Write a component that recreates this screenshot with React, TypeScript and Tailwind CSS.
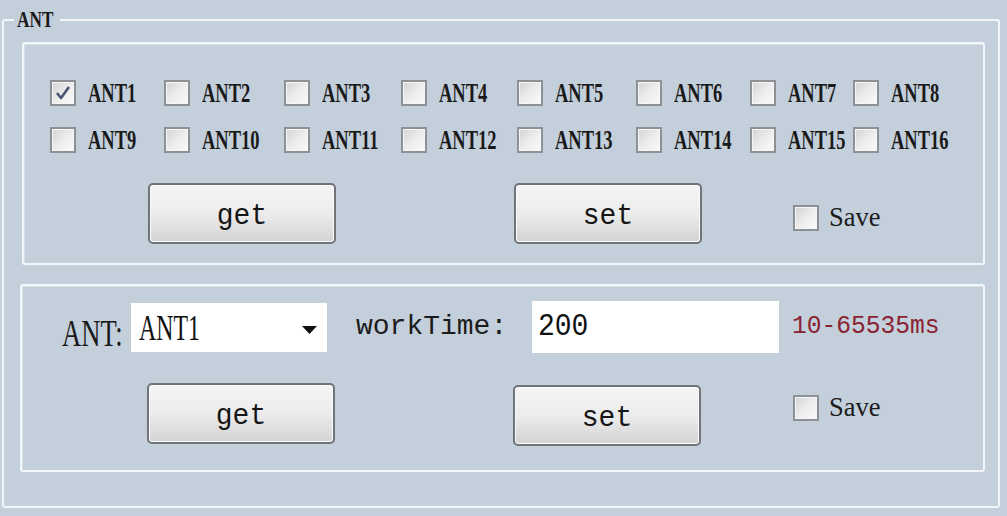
import React from "react";

const serif = "font-['Liberation_Serif',serif]";
const mono = "font-['Liberation_Mono',monospace]";

function Check({ checked = false }: { checked?: boolean }) {
  return (
    <div className="relative w-[26px] h-[26px] shrink-0 border-2 border-[#8d9196] bg-gradient-to-br from-[#d2d3d4] via-[#ececec] to-[#fbfbfb] shadow-[inset_0_0_0_1px_#f6f6f6]">
      {checked && (
        <svg viewBox="0 0 22 22" className="absolute inset-0 w-full h-full">
          <path d="M5 11 L9 16 L17 5" fill="none" stroke="#4a5572" strokeWidth="2.6" strokeLinejoin="round" />
        </svg>
      )}
    </div>
  );
}

function Btn({ label }: { label: string }) {
  return (
    <div className={`flex items-center justify-center w-[188px] h-[61px] shrink-0 rounded-[5px] border-2 border-[#707479] bg-gradient-to-b from-[#f5f5f5] via-[#ececec] via-50% to-[#d3d3d3] shadow-[inset_0_0_0_1px_#fbfbfb] ${mono} text-[28px] text-[#161616] leading-none pt-[4px]`}>
      <span className="inline-block origin-center scale-y-[1.08]">{label}</span>
    </div>
  );
}

function SaveBox() {
  return (
    <div className="flex items-center">
      <Check />
      <span className={`ml-[10px] inline-block origin-left scale-x-[0.98] ${serif} text-[27px] leading-none text-[#1b1b1b]`}>
        Save
      </span>
    </div>
  );
}

const colW = ["w-[114px]", "w-[120px]", "w-[117px]", "w-[116px]", "w-[119px]", "w-[114px]", "w-[103px]", "w-[110px]"];

function AntRow({ start, first }: { start: number; first?: boolean }) {
  return (
    <div className="flex h-[26px] items-center">
      {colW.map((w, i) => (
        <div key={i} className={`${w} flex items-center shrink-0`}>
          <Check checked={first && i === 0} />
          <span className={`ml-[12px] inline-block origin-left scale-x-[0.66] ${serif} font-bold text-[28px] leading-none text-[#1a1a1a] whitespace-nowrap`}>
            ANT{start + i}
          </span>
        </div>
      ))}
    </div>
  );
}

export default function App() {
  return (
    <div className="w-[1007px] h-[516px] bg-[#c3cfdb] pl-[2px] pr-[7px] pt-[19px] overflow-hidden">
      <div className="relative h-[489px] border-2 border-[#f3f6f9] rounded-[3px] pl-[16px] pr-[13px] pt-[21px]">
        <span className={`absolute left-[10px] top-[-14px] bg-[#c3cfdb] px-[3px] inline-block ${serif} font-bold text-[24px] leading-none text-[#1a1a1a]`}>
          <span className="inline-block origin-left scale-x-[0.72] w-[40px]">ANT</span>
        </span>

        {/* Panel 1 */}
        <div className="ml-[2px] h-[223px] border-2 border-[#f3f6f9] rounded-[3px] pt-[36px] pl-[26px] shadow-[inset_1px_1px_0_#d8e0e8]">
          <AntRow start={1} first />
          <div className="mt-[21px]">
            <AntRow start={9} />
          </div>
          <div className="mt-[30px] flex items-center pl-[98px]">
            <Btn label="get" />
            <div className="ml-[178px]">
              <Btn label="set" />
            </div>
            <div className="ml-[91px] mt-[8px]">
              <SaveBox />
            </div>
          </div>
        </div>

        {/* Panel 2 */}
        <div className="mt-[19px] h-[188px] border-2 border-[#f3f6f9] rounded-[3px] pt-[15px] pl-[40px] shadow-[inset_1px_1px_0_#d8e0e8]">
          <div className="flex items-center h-[52px]">
            <div className={`w-[69px] shrink-0 pt-[12px] ${serif} text-[38px] leading-none text-[#1a1a1a] whitespace-nowrap`}>
              <span className="inline-block origin-left scale-x-[0.7]">ANT:</span>
            </div>
            <div className="w-[196px] h-[49px] bg-white flex items-start justify-between pl-[8px] pr-[10px] shrink-0">
              <span className={`inline-block origin-left scale-x-[0.68] mt-[8px] ${serif} text-[35px] leading-none text-[#111]`}>ANT1</span>
              <svg width="15" height="8" viewBox="0 0 15 8" className="mt-[23px]">
                <path d="M0 0 H15 L7.5 8 Z" fill="#111" />
              </svg>
            </div>
            <span className={`ml-[29px] w-[176px] shrink-0 ${mono} text-[28px] leading-none text-[#1c1c1c] whitespace-nowrap`}>
              workTime:
            </span>
            <div className="w-[247px] h-[52px] bg-white shrink-0 flex items-start pl-[6px]">
              <span className={`inline-block mt-[10px] origin-top scale-y-[1.15] ${mono} text-[28px] leading-none text-[#111]`}>200</span>
            </div>
            <span className={`ml-[13px] inline-block origin-center scale-y-[1.08] ${mono} text-[24.6px] leading-none text-[#8a2232] whitespace-nowrap`}>
              10-65535ms
            </span>
          </div>
          <div className="mt-[30px] flex items-start pl-[85px]">
            <Btn label="get" />
            <div className="ml-[178px] mt-[2px]">
              <Btn label="set" />
            </div>
            <div className="ml-[92px] mt-[11px]">
              <SaveBox />
            </div>
          </div>
        </div>
      </div>
    </div>
  );
}
